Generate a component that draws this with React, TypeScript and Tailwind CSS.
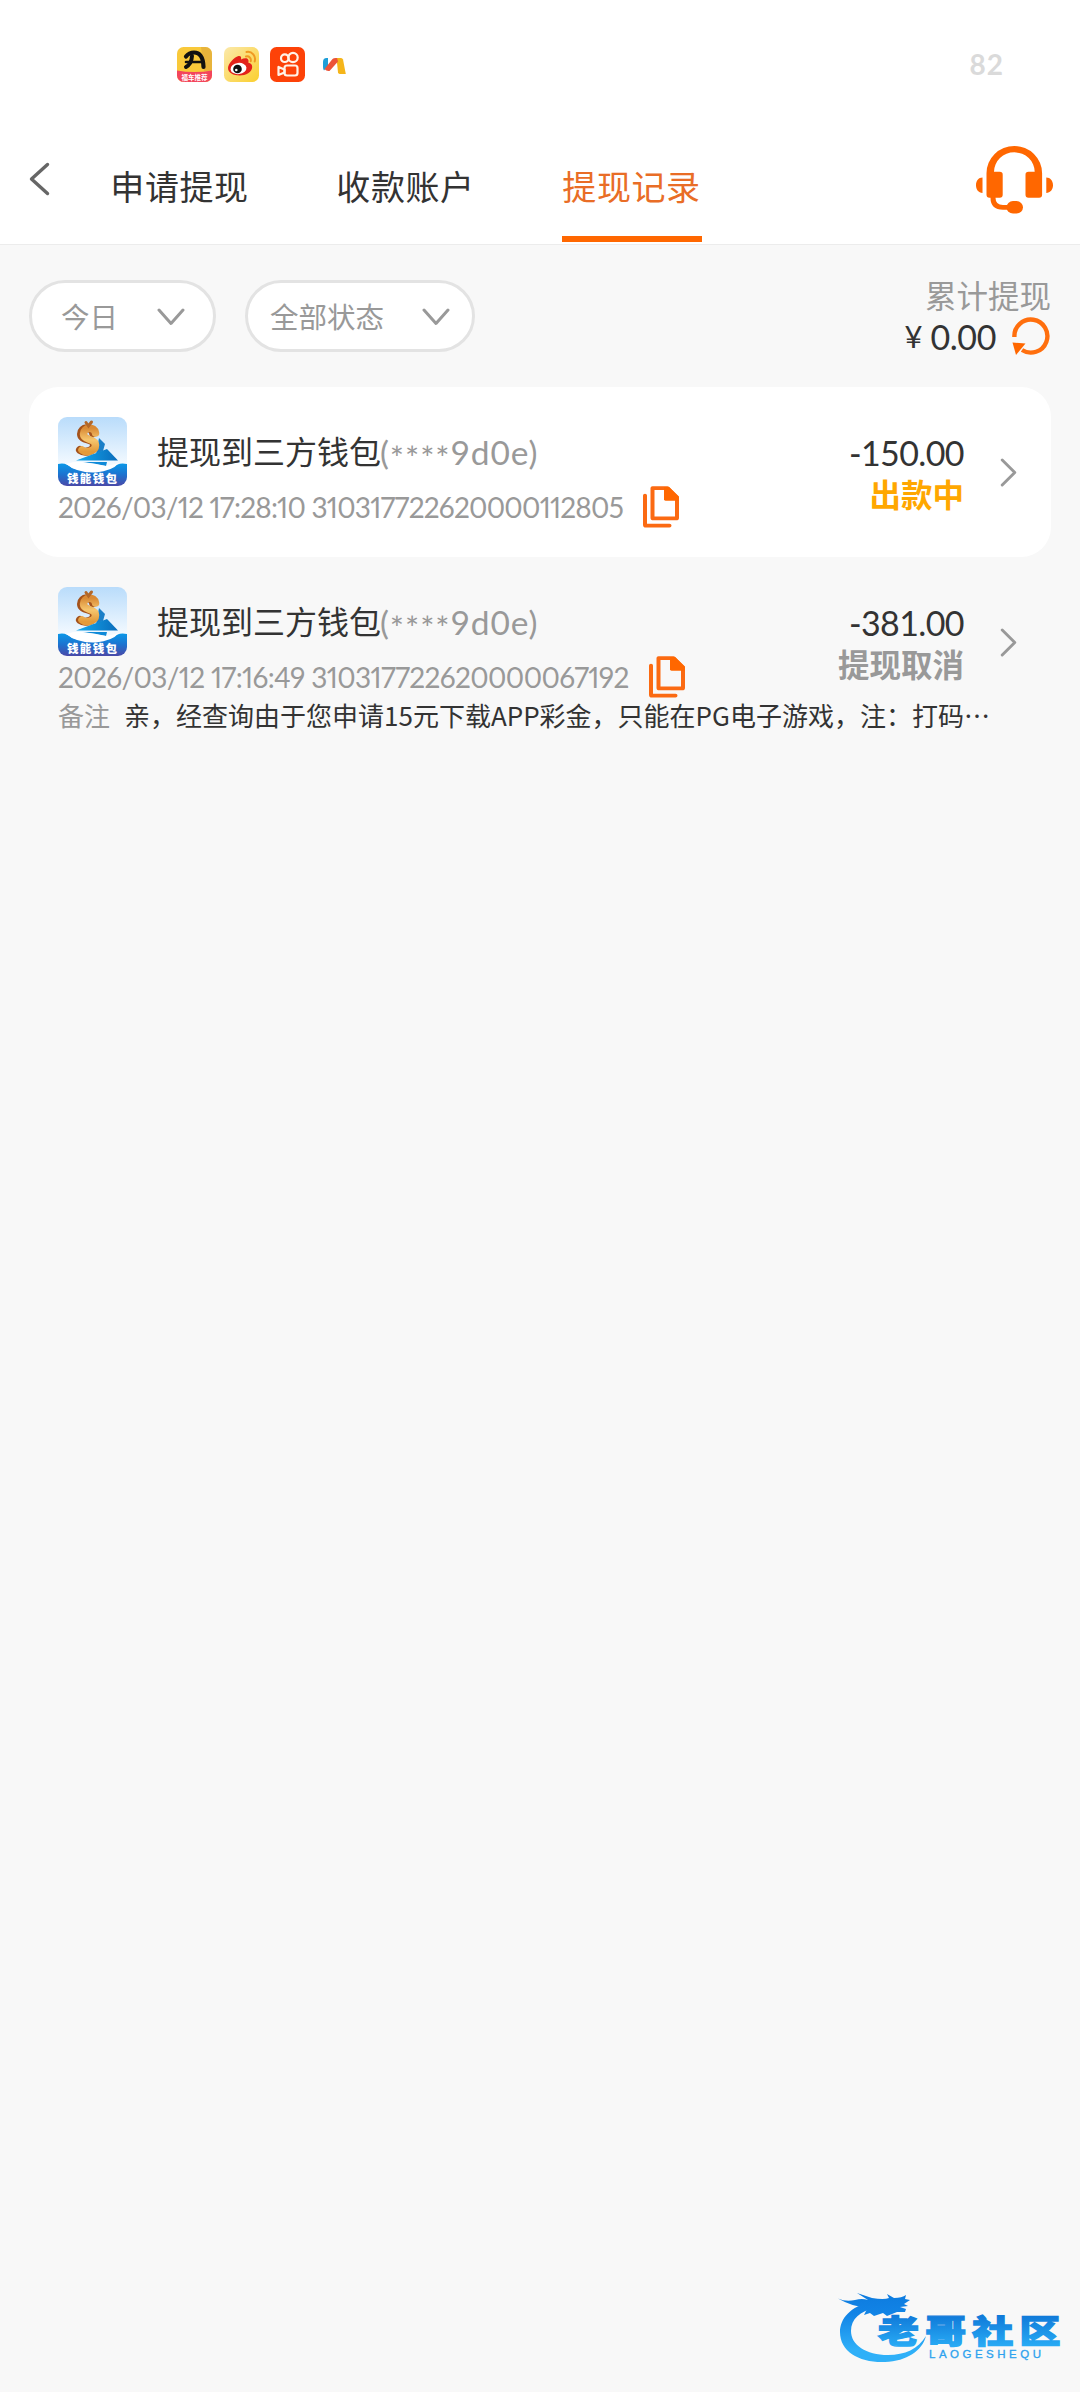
import { useState } from 'react'

type WithdrawRecord = {
  id: string
  title: string
  account: string
  time: string
  orderNo: string
  amount: string
  status: string
  statusClass: string
  lineClass: string
  remark?: string
}

const tabs = ['申请提现', '收款账户', '提现记录']

const records: WithdrawRecord[] = [
  {
    id: '1',
    title: '提现到三方钱包',
    account: '9d0e',
    time: '2026/03/12 17:28:10',
    orderNo: '310317722620000112805',
    amount: '-150.00',
    status: '出款中',
    statusClass: 'text-[#ffa700]',
    lineClass: 'w-[566px] tracking-[-0.770px]',
  },
  {
    id: '2',
    title: '提现到三方钱包',
    account: '9d0e',
    time: '2026/03/12 17:16:49',
    orderNo: '310317722620000067192',
    amount: '-381.00',
    status: '提现取消',
    statusClass: 'text-[#999999]',
    lineClass: 'w-[572px] tracking-[-0.630px]',
    remark: '亲，经查询由于您申请15元下载APP彩金，只能在PG电子游戏，注：打码',
  },
]

function StatusBar() {
  return (
    <div className="flex h-[130px] shrink-0 items-start justify-between pt-[47px] pr-[76px] pl-[177px]">
      <div className="flex items-center gap-[11.5px]">
        <svg width="35" height="35" viewBox="0 0 35 35">
          <clipPath id="carClip">
            <rect width="35" height="35" rx="6.5" />
          </clipPath>
          <g clipPath="url(#carClip)">
            <rect width="35" height="35" fill="#f9c93a" />
            <path d="M24 0h11v24h-8z" fill="#dca63c" opacity=".6" />
            <g fill="none" stroke="#111" strokeLinecap="round">
              <path d="M9 9.500Q12 5.500 17 5.500q9 0 9.500 14.500" strokeWidth="4.200" />
              <path d="M15 9q-.5 8-6 11" strokeWidth="4" />
              <path d="M9 15h16" strokeWidth="2.600" />
            </g>
            <path d="M0 23.500q17 3 35 0V35H0z" fill="#f3455c" />
            <text x="17.500" y="32.700" fontSize="6.500" textAnchor="middle" fill="#fff" className="font-['Noto_Sans_CJK_SC',sans-serif] font-bold">福车推荐</text>
          </g>
        </svg>
        <svg width="35" height="35" viewBox="0 0 35 35">
          <defs>
            <linearGradient id="weiboBg" x1="0" y1="0" x2="1" y2="1">
              <stop offset="0" stopColor="#fbe9ab" />
              <stop offset="1" stopColor="#fbcf2e" />
            </linearGradient>
          </defs>
          <rect width="35" height="35" rx="6.500" fill="url(#weiboBg)" />
          <path d="M4 21c0-4 6-11 10.500-12 2.500-.5 3 1.500 2.500 3.500 3-1.500 7-2 7.500 1 .2 1-.3 2-.3 2 2.500.8 4 2 4 4.500 0 5-6.500 8.500-12.500 8.500C9.500 28.500 4 25.800 4 21z" fill="#e32219" />
          <ellipse cx="14.500" cy="21.500" rx="8" ry="5.600" fill="#fff" transform="rotate(-7 14.500 21.500)" />
          <circle cx="13.500" cy="22" r="4.300" fill="#111" />
          <circle cx="12.300" cy="23" r="1.300" fill="#fff" />
          <path d="M22 9.500c3-.8 5.500 1.700 4.700 4.700M22.500 5c5.500-1 9.800 4 8.200 9.500" fill="none" stroke="#f09a22" strokeWidth="2" strokeLinecap="round" />
        </svg>
        <svg width="35" height="35" viewBox="0 0 35 35">
          <rect width="35" height="35" rx="6.500" fill="#fd4208" />
          <g fill="none" stroke="#fff3e8" strokeWidth="2.200">
            <circle cx="14.800" cy="11.200" r="3.800" />
            <circle cx="23" cy="10.500" r="4.700" />
            <rect x="14.500" y="18.500" width="13" height="10" rx="2.500" />
            <path d="M14.500 22.500L8.500 20v8l6-2.500z" strokeLinejoin="round" />
          </g>
        </svg>
        <svg width="23" height="17" viewBox="0 0 23 17" className="mt-[1px] ml-[6px]">
          <path d="M0 5q0-4 3.500-4H5v8l-4 4.500Q0 12 0 10z" fill="#1d9ed8" />
          <path d="M13.500 1H18q1.500 0 2 1.500L22.800 17H17q-1.500 0-2-1.500z" fill="#f5b51a" />
          <path d="M1.500 12L9.500 2q1.500-1.500 4.500-1l1 3.500L6.500 14q-3 .5-5-2z" fill="#ec5339" />
        </svg>
      </div>
      <span className="mt-[-1px] font-['Lato',sans-serif] text-[28px] leading-9 font-bold tracking-[1px] text-[#dadada]">82</span>
    </div>
  )
}

function HeadsetIcon() {
  return (
    <svg width="77" height="68" viewBox="0 0 77 71" preserveAspectRatio="none" fill="#ff6700">
      <path d="M10.500 28.500a27.800 28.500 0 0 1 55.600 0V51a3 3 0 0 1-3 3H52.500a3 3 0 0 1-3-3V30a3 3 0 0 1 3-3h6.200a20.300 20.300 0 0 0-40.700 0h5.700a3 3 0 0 1 3 3v21a3 3 0 0 1-3 3H13.500a3 3 0 0 1-3-3z" />
      <path d="M6.500 33v16C2.500 49 0 45.500 0 41s2.500-8 6.500-8zM70.300 33v16c4 0 6.700-3.500 6.700-8s-2.700-8-6.700-8z" />
      <path d="M17 52v2q0 10 10 10h7" fill="none" stroke="#ff6700" strokeWidth="5" />
      <rect x="30.500" y="57.500" width="16.500" height="13" rx="6.500" />
    </svg>
  )
}

function CopyIcon() {
  return (
    <svg width="37" height="42" viewBox="0 0 37 44" preserveAspectRatio="none" className="shrink-0">
      <path d="M2 10v30.500q0 1 1 1h23.500" fill="none" stroke="#fb6a12" strokeWidth="4" strokeLinecap="round" />
      <path d="M9.500 2.200h15l9.500 9.600v21.400q0 .8-.8.800H10.300q-.8 0-.8-.8z" fill="none" stroke="#fb6a12" strokeWidth="4" strokeLinejoin="round" />
      <path d="M21 1h5l9.500 10v4.500H22.500q-1.500 0-1.500-1.500z" fill="#ff6700" />
    </svg>
  )
}

function WalletLogo({ id }: { id: string }) {
  return (
    <svg width="69" height="69" viewBox="0 0 69 69" className="shrink-0">
      <defs>
        <linearGradient id={`sky${id}`} x1="0" y1="0" x2="0" y2="1">
          <stop offset="0" stopColor="#b9dcfb" />
          <stop offset=".7" stopColor="#f4faff" />
        </linearGradient>
        <linearGradient id={`sea${id}`} x1="0" y1="0" x2="0" y2="1">
          <stop offset="0" stopColor="#0a98e8" />
          <stop offset=".5" stopColor="#1d72cf" />
          <stop offset="1" stopColor="#4a49a8" />
        </linearGradient>
        <linearGradient id={`gold${id}`} x1="0" y1="0" x2="0" y2="1">
          <stop offset="0" stopColor="#d98a35" />
          <stop offset=".5" stopColor="#f6c66e" />
          <stop offset="1" stopColor="#e39a3a" />
        </linearGradient>
        <linearGradient id={`boat${id}`} x1="0" y1="0" x2="1" y2="0">
          <stop offset="0" stopColor="#14a9ee" />
          <stop offset="1" stopColor="#0a6cbb" />
        </linearGradient>
        <clipPath id={`clip${id}`}>
          <rect width="69" height="69" rx="9" />
        </clipPath>
      </defs>
      <g clipPath={`url(#clip${id})`}>
        <rect width="69" height="69" fill={`url(#sky${id})`} />
        <path d="M41 21l6 6-2 7-7 3z" fill="#1a7fc8" />
        <g fill="none" strokeLinecap="round">
          <path d="M35 16c-1-7-12-6-12 1 0 7 13 4 13 11 0 7-10 8-14 5" stroke="#a4521b" strokeWidth="8" />
          <path d="M37.500 16c-1-7-12-6-12 1 0 7 12 4 12 11 0 7-10 8-13.500 5" stroke={`url(#gold${id})`} strokeWidth="7.500" />
          <path d="M28 5.500l2.500 3.500 3-4" stroke="#b3682a" strokeWidth="3" />
        </g>
        <path d="M18 43.500L49 32l11 11.500z" fill={`url(#boat${id})`} />
        <path d="M24 45h25l-1 4q-12-3-24-4z" fill="#0f8ad8" />
        <path d="M0 47q8-2 14 4 20 7 41-1 6-5 14-3v22H0z" fill={`url(#sea${id})`} />
        <path d="M8 47q10-3 16-2l24 4q6-1 13-3-7 8-23 9.500Q20 56.500 8 47z" fill="#fff" />
        <text x="34" y="65.500" fontSize="11.500" textAnchor="middle" fill="#fff" textLength="50" className="font-['Noto_Sans_CJK_SC',sans-serif] font-black">钱能钱包</text>
      </g>
    </svg>
  )
}

function FilterButton({ label, className }: { label: string; className: string }) {
  return (
    <button className={`flex h-[72px] items-center justify-between rounded-full border-[3px] border-[#e3e3e3] bg-white text-[28.5px] text-[#999999] ${className}`}>
      <span>{label}</span>
      <svg width="28" height="18" viewBox="0 0 28 18" className="mt-[1px]" fill="none" stroke="#999" strokeWidth="3" strokeLinecap="round" strokeLinejoin="round">
        <path d="M2 2l12 13.500L26 2" />
      </svg>
    </button>
  )
}

function RecordItem({ record, active }: { record: WithdrawRecord; active: boolean }) {
  return (
    <div className={`rounded-[30px] pr-[34px] pl-[29px] ${active ? 'h-[170px] bg-white' : ''}`}>
      <div className="flex pt-[30px]">
        <div className="flex-1">
          <div className="flex h-[69px]">
            <WalletLogo id={record.id} />
            <div className="mt-[9px] ml-[30px] flex text-[32px] leading-[48px] whitespace-nowrap text-[#333333]">
              <span className="w-[223px]">{record.title}</span>
              <span className="mt-[2px] font-['Lato',sans-serif] text-[33.5px] tracking-[.9px] text-[#999999]">
                (<span className="relative top-[5px]">****</span>{record.account})
              </span>
            </div>
          </div>
          <div className="flex h-[42px] items-center">
            <div className={`font-['Lato',sans-serif] text-[28px] leading-[42px] whitespace-nowrap text-[#999999] proportional-nums ${record.lineClass}`}>
              {record.time} {record.orderNo}
            </div>
            <div className="ml-[19px]"><CopyIcon /></div>
          </div>
        </div>
        <div className="mt-[15px] mr-[36px] text-right">
          <div className="font-['Lato',sans-serif] text-[34px] leading-[42px] tracking-[-.6px] text-[#333333]">{record.amount}</div>
          <div className={`text-[31.5px] leading-[38px] font-bold ${record.statusClass}`}>{record.status}</div>
        </div>
        <svg width="17" height="29" viewBox="0 0 17 30" className="mt-[41px]" fill="none" stroke="#999" strokeWidth="3" strokeLinecap="round" strokeLinejoin="round">
          <path d="M2 2l13 13L2 28" />
        </svg>
      </div>
      {record.remark && (
        <div className="flex text-[26px] leading-[34px] whitespace-nowrap text-[#333333]">
          <span className="mr-[14px] text-[#999999]">备注</span>
          <span>{record.remark}</span>
          <span>⋯</span>
        </div>
      )}
    </div>
  )
}

function CommunityLogo() {
  return (
    <svg width="224" height="80" viewBox="0 0 224 80">
      <defs>
        <linearGradient id="brand" x1="0" y1="0" x2="0" y2="80" gradientUnits="userSpaceOnUse">
          <stop offset="0" stopColor="#0b78dd" />
          <stop offset=".35" stopColor="#1284e6" />
          <stop offset=".8" stopColor="#2fb0f8" />
        </linearGradient>
        <linearGradient id="brandText" x1="0" y1="0" x2="0" y2="1">
          <stop offset=".2" stopColor="#0f78d8" />
          <stop offset="1" stopColor="#2db4fa" />
        </linearGradient>
      </defs>
      <path d="M34 16C12 20 2 33 2 46c0 20 20 31 45 30 22-1 37-11 41-26-8 13-21 19-38 19-22 0-37-10-37-24 0-12 9-20 24-23z" fill="url(#brand)" />
      <path d="M-1 12q8 4 18 2 7-2 13 0L19 7l15 5q12 2 17 0l-2-4 7 4q8 0 12-3l-1 4 5 1-6 4 4 2-8 1 6 2-1 3-8 0-10 4-4-3-9 3-4-3-6 2 4-8Q16 22-1 12z" fill="url(#brand)" />
      <text transform="translate(40 56.500) scale(1.280 1)" fontSize="32" textLength="142.500" lengthAdjust="spacing" fill="url(#brandText)" stroke="url(#brandText)" strokeWidth="1.400" className="font-['Noto_Sans_CJK_SC',sans-serif] font-black">老哥社区</text>
      <text x="91" y="71.500" fontSize="11.500" textLength="112" fill="#2da2ee" stroke="#2da2ee" strokeWidth=".3" className="font-['Liberation_Sans',sans-serif]">LAOGESHEQU</text>
    </svg>
  )
}

export default function App() {
  const [tab, setTab] = useState('提现记录')

  return (
    <div className="flex min-h-[2392px] w-[1080px] flex-col bg-[#f8f8f8] font-['Noto_Sans_CJK_SC',sans-serif]">
      <header className="h-[245px] border-b border-[#ececec] bg-white">
        <StatusBar />
        <div className="flex items-start pr-[27px] pl-[29px]">
          <svg width="21" height="34" viewBox="0 0 21 34" className="mt-[32px]" fill="none" stroke="#666" strokeWidth="3.400" strokeLinecap="round" strokeLinejoin="round">
            <path d="M18.500 2.500L2.500 17l16 14.500" />
          </svg>
          <nav className="ml-[60px] flex gap-[86px]">
            {tabs.map((t) => (
              <button
                key={t}
                onClick={() => setTab(t)}
                className={`flex h-[112px] w-[140px] flex-col border-b-[6px] pt-[30px] text-[34px] leading-[52px] tracking-[.6px] whitespace-nowrap ${
                  t === tab ? 'border-[#ff6700] text-[#e96d26]' : 'border-transparent text-[#333333]'
                }`}
              >
                <span className="ml-[-1px]">{t}</span>
              </button>
            ))}
          </nav>
          <div className="mt-[16px] ml-auto"><HeadsetIcon /></div>
        </div>
      </header>

      <div className="flex h-[142px] items-start px-[29px] pt-[35px]">
        <FilterButton label="今日" className="w-[187px] pr-[28px] pl-[29px]" />
        <FilterButton label="全部状态" className="ml-[29px] w-[230px] pr-[22px] pl-[22px]" />
        <div className="ml-auto flex flex-col items-end">
          <div className="mt-[-8px] text-[31.5px] leading-[44px] text-[#999999]">累计提现</div>
          <div className="flex h-[40px] items-center text-[#333333]">
            <span className="mr-[8px] font-['Lato',sans-serif] text-[31px]">¥</span>
            <span className="font-['Lato',sans-serif] text-[34px] tracking-[-.4px]">0.00</span>
            <svg width="38" height="38" viewBox="0 0 38 38" className="mr-[1px] ml-[16px]">
              <path d="M2.400 20A16.500 16.500 0 1 1 10 33" fill="none" stroke="#ff6f0e" strokeWidth="4.400" />
              <path d="M.5 25.500l13 1L4 38z" fill="#ff6700" />
            </svg>
          </div>
        </div>
      </div>

      <main className="flex flex-col px-[29px]">
        {records.map((r, i) => (
          <RecordItem key={r.id} record={r} active={i === 0} />
        ))}
      </main>

      <div className="mt-auto mr-[18px] mb-[26px] self-end"><CommunityLogo /></div>
    </div>
  )
}
